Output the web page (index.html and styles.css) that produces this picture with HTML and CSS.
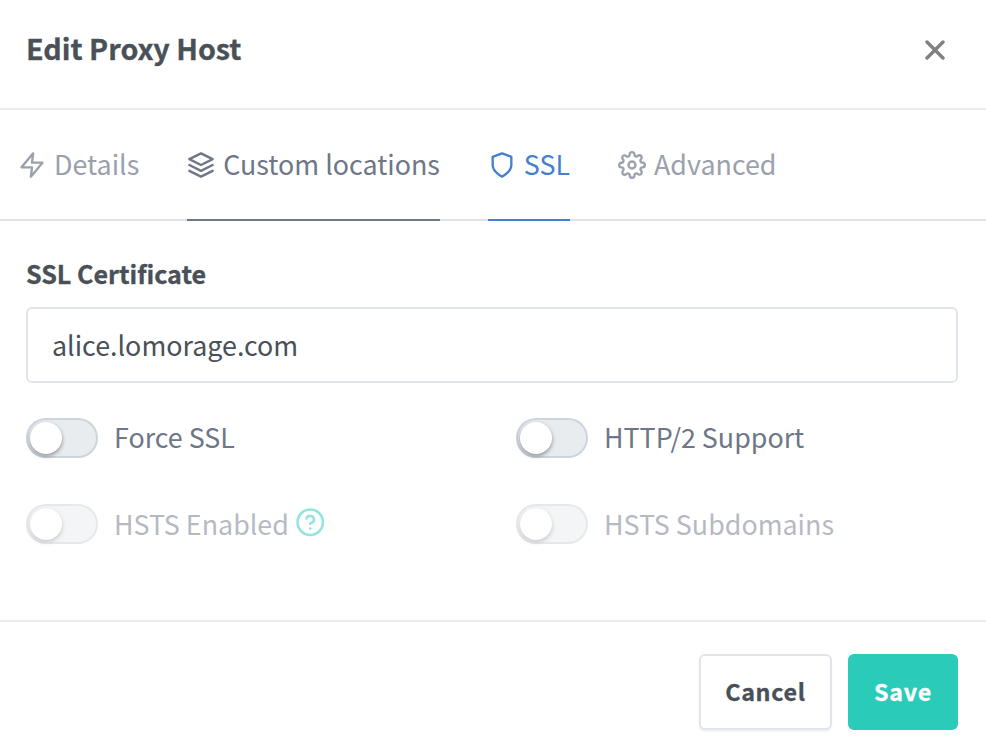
FILE: index.html
```html
<!DOCTYPE html>
<html lang="en">
<head>
<meta charset="utf-8">
<title>Edit Proxy Host</title>
<link rel="stylesheet" href="styles.css">
</head>
<body>
<div class="modal">
  <header class="modal-header">
    <h5 class="title"><span>Edit Proxy Host</span></h5>
    <button class="close" aria-label="Close"><svg viewBox="0 0 20 20"><path d="M2 2l16 16M18 2l-16 16"/></svg></button>
  </header>
  <nav class="tabs">
    <a class="tab details"><svg class="icon" viewBox="0 0 24 24"><polygon points="13 2 3 14 12 14 11 22 21 10 12 10 13 2"/></svg><span>Details</span></a>
    <a class="tab hover locations"><svg class="icon" viewBox="0 0 24 24"><polygon points="12 2 2 7 12 12 22 7 12 2"/><polyline points="2 17 12 22 22 17"/><polyline points="2 12 12 17 22 12"/></svg><span>Custom locations</span></a>
    <a class="tab active"><svg class="icon" viewBox="0 0 24 24"><path d="M12 22s8-4 8-10V5l-8-3-8 3v7c0 6 8 10 8 10z"/></svg><span>SSL</span></a>
    <a class="tab"><svg class="icon" viewBox="0 0 24 24"><circle cx="12" cy="12" r="3"/><path d="M19.4 15a1.65 1.65 0 0 0 .33 1.82l.06.06a2 2 0 0 1 0 2.83 2 2 0 0 1-2.83 0l-.06-.06a1.65 1.65 0 0 0-1.82-.33 1.65 1.65 0 0 0-1 1.51V21a2 2 0 0 1-2 2 2 2 0 0 1-2-2v-.09A1.65 1.65 0 0 0 9 19.4a1.65 1.65 0 0 0-1.82.33l-.06.06a2 2 0 0 1-2.83 0 2 2 0 0 1 0-2.83l.06-.06a1.65 1.65 0 0 0 .33-1.82 1.65 1.65 0 0 0-1.51-1H3a2 2 0 0 1-2-2 2 2 0 0 1 2-2h.09A1.65 1.65 0 0 0 4.6 9a1.65 1.65 0 0 0-.33-1.82l-.06-.06a2 2 0 0 1 0-2.83 2 2 0 0 1 2.83 0l.06.06a1.65 1.65 0 0 0 1.82.33H9a1.65 1.65 0 0 0 1-1.51V3a2 2 0 0 1 2-2 2 2 0 0 1 2 2v.09a1.65 1.65 0 0 0 1 1.51 1.65 1.65 0 0 0 1.82-.33l.06-.06a2 2 0 0 1 2.83 0 2 2 0 0 1 0 2.83l-.06.06a1.65 1.65 0 0 0-.33 1.82V9a1.65 1.65 0 0 0 1.51 1H21a2 2 0 0 1 2 2 2 2 0 0 1-2 2h-.09a1.65 1.65 0 0 0-1.51 1z"/></svg><span>Advanced</span></a>
  </nav>
  <main class="modal-body">
    <label class="label"><span>SSL Certificate</span></label>
    <div class="select"><span>alice.lomorage.com</span></div>
    <div class="switches">
      <label class="switch"><i class="track"></i><span>Force SSL</span></label>
      <label class="switch"><i class="track"></i><span>HTTP/2 Support</span></label>
      <label class="switch disabled"><i class="track"></i><span>HSTS Enabled</span><svg class="help" viewBox="0 0 24 24"><circle cx="12" cy="12" r="10"/><path d="M9.09 9a3 3 0 0 1 5.83 1c0 2-3 3-3 3"/><path d="M12 17h.01"/></svg></label>
      <label class="switch disabled"><i class="track"></i><span>HSTS Subdomains</span></label>
    </div>
  </main>
  <footer class="modal-footer">
    <button class="btn cancel"><span>Cancel</span></button>
    <button class="btn save"><span>Save</span></button>
  </footer>
</div>
</body>
</html>
```

FILE: styles.css
```css
* { box-sizing: border-box; }
body {
  margin: 0;
  background: #fff;
  color: #495057;
  font-family: "Noto Sans CJK SC", "Open Sans", sans-serif;
  font-size: 26.85px;
  line-height: 40px;
}
svg { fill: none; stroke: currentColor; stroke-width: 2; stroke-linecap: round; stroke-linejoin: round; flex: none; }
button { font: inherit; color: inherit; background: none; border: 0; padding: 0; }
span { white-space: nowrap; }
.modal { width: 986px; height: 747px; overflow: hidden; }
.modal-header {
  height: 110px;
  padding: 0 41px 10px 26px;
  display: flex;
  align-items: center;
  justify-content: space-between;
  border-bottom: 2px solid #e9ecef;
}
.title { margin: 0; padding-bottom: 2px; font-size: 28.7px; font-weight: 700; }
.title, .label, .btn { -webkit-text-stroke: .3px currentColor; }
.close { width: 20px; height: 20px; margin-top: 1px; color: #808080; }
.close svg { display: block; width: 20px; height: 20px; stroke-width: 3.4; }
.tabs {
  height: 111px;
  padding-left: 18px;
  display: flex;
  gap: 48px;
  border-bottom: 2px solid #dee2e6;
}
.tab {
  height: 111px;
  display: flex;
  align-items: center;
  gap: 8px;
  color: #9aa0ac;
  border-bottom: 2px solid transparent;
}
.tab span { padding-bottom: 2px; }
.tab.hover { color: #6e7687; border-color: #6e7687; }
.tab.active { color: #467fcf; border-color: #467fcf; }
.icon { width: 28px; height: 28px; margin-top: 1px; }
.modal-body { height: 401px; padding: 32px 28px 0 26px; border-bottom: 2px solid #e9ecef; }
.label { display: block; font-size: 25.1px; font-weight: 700; }
.select {
  height: 76px;
  margin-top: 14px;
  padding-left: 24px;
  display: flex;
  align-items: center;
  border: 2px solid rgba(0, 40, 100, .12);
  border-radius: 6px;
}
.switches { margin-top: 35px; display: grid; grid-template-columns: 490px 1fr; row-gap: 46px; }
.switch { height: 40px; display: flex; align-items: center; color: #6e7687; }
.switch:not(.disabled) span { padding-bottom: 2px; }
.track {
  width: 72px;
  height: 40px;
  margin-right: 16px;
  padding: 2px;
  border: 2px solid rgba(0, 40, 100, .12);
  border-radius: 20px;
  background: #e9ecef;
}
.track::before {
  content: "";
  display: block;
  width: 32px;
  height: 32px;
  border-radius: 50%;
  background: #fff;
  box-shadow: 0 2px 4px rgba(0, 0, 0, .4);
}
.disabled { opacity: .5; }
.help { width: 30.5px; height: 30.5px; margin: 0 0 3px 6px; color: #2bcbba; }
.modal-footer { padding: 32px 28px 0; display: flex; justify-content: flex-end; gap: 16px; }
.btn {
  height: 76px;
  width: 133px;
  padding-bottom: 2px;
  border: 2px solid rgba(0, 40, 100, .12);
  border-radius: 6px;
  font-size: 23.3px;
  font-weight: 700;
  letter-spacing: .03em;
}
.cancel { box-shadow: 0 2px 2px rgba(0, 0, 0, .05); }
.save { width: 110px; color: #fff; background: #2bcbba; border-color: #2bcbba; }
```
